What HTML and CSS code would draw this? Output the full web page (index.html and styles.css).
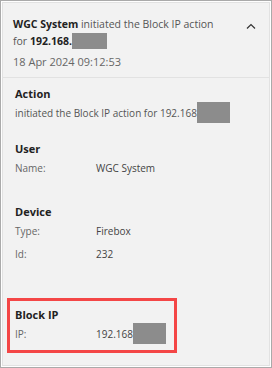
FILE: index.html
```html
<!DOCTYPE html>
<html lang="en">
<head>
  <meta charset="UTF-8">
  <title>Block IP Event</title>
  <link rel="stylesheet" href="styles.css">
</head>
<body>
  <div class="frame">
    <div class="card">
      <div class="event-head">
        <div class="event-title">
          <p class="title-text"><b>WGC System</b> initiated the Block IP action for <b>192.168.</b><span class="redact head-redact"></span></p>
          <p class="event-date">18 Apr 2024 09:12:53</p>
        </div>
        <svg class="chevron" width="10" height="6" viewBox="0 0 10 6">
          <polyline points="1,5.5 5,1.5 9,5.5" fill="none" stroke="#333" stroke-width="1.2"/>
        </svg>
      </div>

      <div class="section sec-action">
        <h3>Action</h3>
        <div class="row">initiated the Block IP action for 192.168<span class="redact"></span></div>
      </div>

      <div class="section sec-user">
        <h3>User</h3>
        <div class="row"><span class="label">Name:</span><span class="value">WGC System</span></div>
      </div>

      <div class="section sec-device">
        <h3>Device</h3>
        <div class="row"><span class="label">Type:</span><span class="value">Firebox</span></div>
        <div class="row"><span class="label">Id:</span><span class="value">232</span></div>
      </div>

      <div class="section sec-block">
        <h3>Block IP</h3>
        <div class="row"><span class="label">IP:</span><span class="value">192.168</span><span class="redact"></span></div>
      </div>
    </div>
  </div>
</body>
</html>
```

FILE: styles.css
```css
html, body {
  margin: 0;
  padding: 0;
  background: #fff;
}

body {
  font-family: "Open Sans", "Liberation Sans", sans-serif;
  color: #444;
}

.frame {
  width: 272px;
  height: 368px;
  box-sizing: border-box;
  border: 1px solid #aaa;
  padding: 1px;
  background: #fff;
}

.card {
  height: 100%;
  box-sizing: border-box;
  border: 1px solid #e2e2e2;
  background: #f2f2f2;
}

.event-head {
  display: flex;
  justify-content: space-between;
  padding: 13px 13px 7px 10px;
  border-bottom: 1px solid #e2e2e2;
}

.event-title {
  width: 216px;
}

.title-text {
  margin: 0;
  font-size: 10.5px;
  line-height: 17px;
  color: #555;
}

.title-text b {
  color: #222;
}

.event-date {
  margin: 3px 0 0;
  font-size: 11px;
  line-height: 17px;
  color: #666;
}

.chevron {
  margin-top: 7px;
}

.redact {
  display: inline-block;
  width: 33px;
  height: 21px;
  background: #8c8c8c;
}

.head-redact {
  width: 35px;
  height: 16px;
  vertical-align: -4px;
}

.section {
  padding-left: 12px;
}

.section h3 {
  margin: 0;
  font-size: 11px;
  line-height: 14px;
  font-weight: 700;
  color: #222;
}

.row {
  display: flex;
  align-items: center;
  height: 23px;
  font-size: 10px;
  color: #555;
}

.label {
  width: 81px;
  color: #666;
}

.value {
  color: #444;
}

.sec-action {
  padding-top: 9px;
}

.sec-user {
  margin-top: 18px;
}

.sec-device {
  margin-top: 26px;
}

.sec-block {
  width: 159px;
  margin: 33px 0 0 4px;
  padding: 7px 0 5px 5px;
  border: 3px solid #f44646;
}
```
